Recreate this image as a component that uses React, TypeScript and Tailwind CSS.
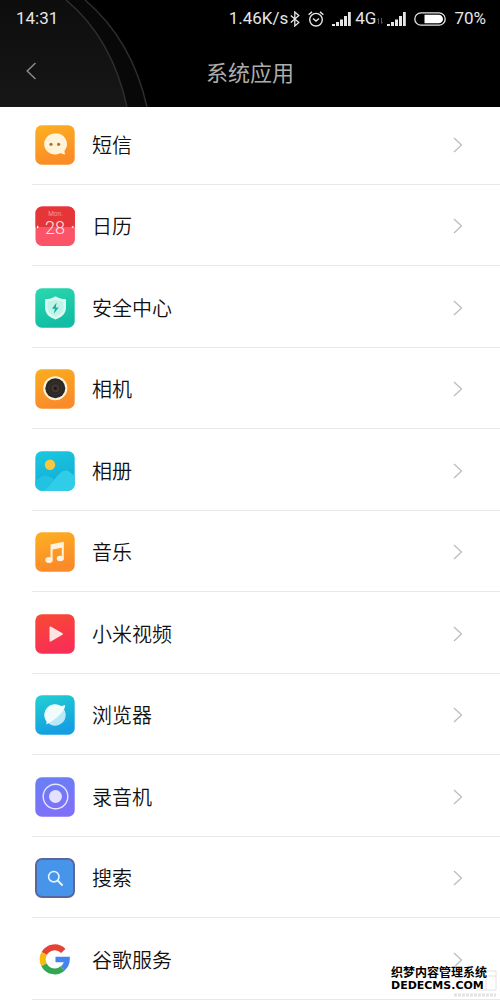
import type { ReactNode } from "react";

type AppItem = {
    name: string;
    icon: ReactNode;
};

// Fundo arredondado comum aos ícones, com degradê vertical
function Tile({ id, from, to, children }: { id: string; from: string; to: string; children: ReactNode }) {
    return (
        <svg viewBox="0 0 40 40" className="size-10 shrink-0" aria-hidden="true">
            <defs>
                <linearGradient id={id} x1="0" y1="0" x2="0.3" y2="1">
                    <stop offset="0" stopColor={from} />
                    <stop offset="1" stopColor={to} />
                </linearGradient>
            </defs>
            <rect x="0.3" y="0.3" width="39.4" height="39.4" rx="6.5" fill={`url(#${id})`} />
            {children}
        </svg>
    );
}

const apps: AppItem[] = [
    {
        name: "短信",
        icon: (
            <Tile id="sms" from="#fcb022" to="#fb8c26">
                <path d="M20 8.5a11 10.5 0 1 0 5.6 19.6c1.3.8 3 1.3 4.7 1.3-.7-1.3-1-2.6-.7-4A10.7 10.5 0 0 0 20 8.5z" fill="#fff4da" />
                <circle cx="16" cy="19.3" r="1.6" fill="#b5722f" />
                <circle cx="23.6" cy="19.3" r="1.6" fill="#b5722f" />
            </Tile>
        ),
    },
    {
        name: "日历",
        icon: (
            <svg viewBox="0 0 40 40" className="size-10 shrink-0" aria-hidden="true">
                <rect x="0.5" y="0.5" width="39.4" height="39.4" rx="6.5" fill="#fb5468" />
                <path d="M.5 21V7A6.5 6.5 0 0 1 7 .5h26.4A6.5 6.5 0 0 1 39.9 7v14z" fill="#e53539" />
                <text x="20.5" y="9.5" textAnchor="middle" fontSize="6.5" fill="#f59a98" fontFamily="Roboto, sans-serif">Mon.</text>
                <text x="20" y="28" textAnchor="middle" fontSize="18" fontWeight="300" fill="#ffe6e8" fontFamily="Roboto, sans-serif">28</text>
                <path d="M2 19.5l2 1.5-2 1.5zM38.4 19.5l-2 1.5 2 1.5z" fill="#fff" />
            </svg>
        ),
    },
    {
        name: "安全中心",
        icon: (
            <Tile id="security" from="#2bd8ae" to="#12bda4">
                <path d="M20.5 8.3c3 2 6.5 2.7 10.5 2.9v8.3c0 6-4 9.8-10.5 12-6.5-2.2-10.5-6-10.5-12v-8.3c4-.2 7.5-.9 10.5-2.9z" fill="#d9faf2" />
                <path d="M20.5 11.3c2.5 1.5 5 2.1 8 2.3v6c0 4.5-3 7.3-8 9.2-5-1.9-8-4.7-8-9.2v-6c3-.2 5.5-.8 8-2.3z" fill="#c3f2e8" />
                <path d="M21.5 14.5l-4.5 6.2h2.8l-1 5 5-6.3h-2.9z" fill="#17b39d" />
            </Tile>
        ),
    },
    {
        name: "相机",
        icon: (
            <Tile id="camera" from="#fbae1e" to="#fa8b2a">
                <circle cx="20.3" cy="19.3" r="12" fill="#fff3dc" />
                <circle cx="20.3" cy="19.3" r="10" fill="#2b2826" />
                <circle cx="20.3" cy="19.3" r="6.5" fill="none" stroke="#393532" />
                <circle cx="20.3" cy="19.3" r="3.5" fill="#38302c" stroke="#54443a" strokeWidth="0.8" />
                <circle cx="20.3" cy="19.3" r="1.2" fill="#171514" />
            </Tile>
        ),
    },
    {
        name: "相册",
        icon: (
            <Tile id="gallery" from="#1cc9de" to="#12acd9">
                <circle cx="15" cy="13.7" r="5.2" fill="#fac83e" />
                <path d="M.3 29.5c3-1.5 6.500-5 10.500-5 3.500 0 5.500 2.500 8.500 4l-9 11.200H6.800A6.500 6.500 0 0 1 .3 33.200z" fill="#22c3e2" />
                <path d="M9 39.7c6-4.500 10-11.500 15-16.700 3.500-3.600 7.500-4.500 10.500-2 1.800 1.500 3.500 2.500 5.200 3.200v9a6.500 6.500 0 0 1-6.500 6.500z" fill="#30cde8" />
            </Tile>
        ),
    },
    {
        name: "音乐",
        icon: (
            <Tile id="music" from="#fdb022" to="#fb8a28">
                <path d="M15.5 12.5l13.3-2.7v17h-2V15.7l-9.2 1.8v10.7h-2.100z" fill="#fff1dc" />
                <ellipse cx="14" cy="28" rx="3.7" ry="2.9" fill="#fff1dc" />
                <ellipse cx="25.3" cy="26.5" rx="3.6" ry="2.8" fill="#fff1dc" />
            </Tile>
        ),
    },
    {
        name: "小米视频",
        icon: (
            <Tile id="video" from="#f84a32" to="#f82f55">
                <path d="M14.5 13.3v13.4c0 .8.7 1.1 1.3.7l11.600-6.600c.7-.4.7-1.200 0-1.600l-11.600-6.600c-.6-.4-1.300 0-1.300.7z" fill="#ffe4e4" />
            </Tile>
        ),
    },
    {
        name: "浏览器",
        icon: (
            <Tile id="browser" from="#22d0d2" to="#149fe2">
                <circle cx="20" cy="20" r="10.7" fill="#b9e8f6" />
                <path d="M11.2 29.5l.6-2.700A10.700 10.700 0 0 1 26.200 11.300L30 10c.3 1.500-.2 3-1.300 4.800C25 20.500 18.500 26 11.200 29.500z" fill="#f1fcfd" />
            </Tile>
        ),
    },
    {
        name: "录音机",
        icon: (
            <Tile id="recorder" from="#6880f5" to="#7f70f8">
                <circle cx="20.5" cy="19.5" r="12.3" fill="none" stroke="#e6e7ff" strokeWidth="1.4" />
                <circle cx="20.5" cy="19.5" r="6.5" fill="#e3e1fd" />
            </Tile>
        ),
    },
    {
        name: "搜索",
        icon: (
            <svg viewBox="0 0 40 40" className="size-10 shrink-0" aria-hidden="true">
                <rect x="1" y="1" width="38" height="38" rx="6" fill="#4795ea" stroke="#5a679f" strokeWidth="2" />
                <circle cx="18.8" cy="18.7" r="5.2" fill="none" stroke="#e9f4ff" strokeWidth="1.6" />
                <path d="M22.6 22.5l5 5" stroke="#e9f4ff" strokeWidth="1.8" />
            </svg>
        ),
    },
    {
        name: "谷歌服务",
        icon: (
            <svg viewBox="0 0 40 40" className="size-10 shrink-0" fill="none" strokeWidth="6" aria-hidden="true">
                <path d="M9.2 13.5A12 12 0 0 1 28.3 11" stroke="#e34335" />
                <path d="M9.1 24.8A12 12 0 0 1 9.2 13.5" stroke="#f9bb0d" />
                <path d="M27.6 28.5A12 12 0 0 1 9.1 24.8" stroke="#33a653" />
                <path d="M20.5 19.5h11.5A12 12 0 0 1 27.6 28.5" stroke="#4384f0" strokeWidth="5.6" />
            </svg>
        ),
    },
];

function Signal() {
    return (
        <svg viewBox="0 0 19 14" className="h-[14px] w-[19px]" fill="#e6e6e6" aria-hidden="true">
            <path d="M0 12h3v2H0zM4 10h3v4H4zM8 7.5h3V14H8zM12 4h3v10h-3zM16 0h2.8v14H16z" />
        </svg>
    );
}

function StatusBar() {
    return (
        <div className="flex h-[37px] items-center justify-between pr-[14px] pl-4 font-[Roboto,sans-serif] text-[17px] text-[#e6e6e6]">
            <span>14:31</span>
            <div className="flex items-center">
                <span>1.46K/s</span>
                <svg viewBox="0 0 10 16" className="ml-[2px] h-4 w-[10px]" fill="none" stroke="#e6e6e6" strokeWidth="1.3" aria-hidden="true">
                    <path d="M.8 4.5l8 7-4 3.500V1l4 3.500-8 7" />
                </svg>
                <svg viewBox="0 0 16 16" className="ml-2 size-4" fill="none" stroke="#e6e6e6" strokeWidth="1.4" aria-hidden="true">
                    <circle cx="8" cy="8.7" r="6.3" />
                    <path d="M.6 3.8L4 .9M15.4 3.8L12 .9M5 7.5l3 2.5 3-2.5" />
                </svg>
                <span className="ml-2"><Signal /></span>
                <span className="ml-1">4G</span>
                <svg viewBox="0 0 6 6" className="mt-1 ml-px h-[6px] w-[6px]" stroke="#666" strokeWidth="0.8" fill="none" aria-hidden="true">
                    <path d="M1.5 6V.5L.3 2M4.5 0v5.5L5.7 4" />
                </svg>
                <span className="ml-1"><Signal /></span>
                <svg viewBox="0 0 32 14" className="ml-2 h-[14px] w-8" aria-hidden="true">
                    <rect x="0.8" y="0.8" width="30.4" height="12.4" rx="6.2" fill="none" stroke="#e6e6e6" strokeWidth="1.3" />
                    <path d="M10.5 2.7h14.2a4.3 4.3 0 0 1 0 8.6H10.5z" fill="#fff" />
                </svg>
                <span className="ml-2">70%</span>
            </div>
        </div>
    );
}

export default function App() {
    return (
        <div className="relative bg-white font-['Noto_Sans_CJK_SC',sans-serif]">
            <header className="relative z-10 h-[107px] overflow-hidden bg-black">
                {/* arcos decorativos no canto */}
                <svg viewBox="0 0 160 107" className="absolute top-0 left-0 h-[107px] w-40" aria-hidden="true">
                    <defs>
                        <linearGradient id="arc" x1="0" y1="0" x2="0" y2="1">
                            <stop offset="0" stopColor="#0d0d0d" />
                            <stop offset="1" stopColor="#171717" />
                        </linearGradient>
                    </defs>
                    <path d="M0 0h85q47 40 62 107H0z" fill="#080808" />
                    <path d="M0 0h66q46 38 61 107H0z" fill="url(#arc)" />
                    <path d="M66 0q46 38 61 107M85 0q47 40 62 107" fill="none" stroke="#2e2e2e" strokeWidth="1.5" />
                </svg>
                <div className="relative">
                    <StatusBar />
                    <div className="grid h-[68px] grid-cols-[64px_1fr_64px] items-center">
                        <button type="button" aria-label="返回" className="flex h-full items-center pl-[26px]">
                            <svg viewBox="0 0 10 18" className="h-[18px] w-[10px]" fill="none" stroke="#8a8a8a" strokeWidth="1.5" aria-hidden="true">
                                <path d="M9.5 1L1.2 9l8.3 8" />
                            </svg>
                        </button>
                        <h1 className="text-center text-[22px] text-[#acacac]">系统应用</h1>
                    </div>
                </div>
            </header>

            {/* lista rolada: o topo fica sob o cabeçalho */}
            <ul className="-mt-1 pl-8">
                {apps.map((app) => (
                    <li key={app.name} className="border-b border-[#e8e8e8] odd:h-[82px] even:h-[81px]">
                        <a href="#" className="flex h-full items-center pt-[2px] pr-[37px] pl-[3px]">
                            {app.icon}
                            <span className="ml-[17px] flex-1 text-xl font-[350] text-[#111]">{app.name}</span>
                            <svg viewBox="0 0 10 16" className="h-4 w-[10px]" fill="none" stroke="#bdbdbd" strokeWidth="1.3" aria-hidden="true">
                                <path d="M1 1l7.5 7L1 15" />
                            </svg>
                        </a>
                    </li>
                ))}
            </ul>

            <div className="absolute right-0 bottom-0 h-9 w-[109px] text-black">
                <svg viewBox="0 0 46 36" className="absolute right-0 bottom-0 h-9 w-[46px]" fill="none" stroke="#e2e2e2" aria-hidden="true">
                    <path d="M6 26V7h12v19M22 7v19M22 7h20v19H22M32 7v19M42 12H22" />
                    <path d="M0 31h42" strokeWidth="3" strokeDasharray="3 1" />
                </svg>
                <div className="relative text-xs leading-4 font-bold [paint-order:stroke] [-webkit-text-stroke:2px_white]">织梦内容管理系统</div>
                <div className="relative font-['DejaVu_Sans',sans-serif] text-[11px] leading-3 font-bold [paint-order:stroke] [-webkit-text-stroke:2px_white]">DEDECMS.COM</div>
            </div>
        </div>
    );
}
